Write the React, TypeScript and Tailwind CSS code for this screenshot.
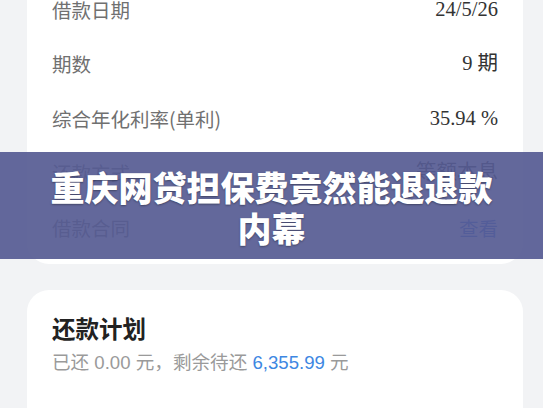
const rows: { label: string; value: string; blue?: boolean }[] = [
  { label: "借款日期", value: "24/5/26" },
  { label: "期数", value: "9 期" },
  { label: "综合年化利率(单利)", value: "35.94 %" },
  { label: "还款方式", value: "等额本息" },
  { label: "借款合同", value: "查看", blue: true },
];

const sans = "font-['Noto_Sans_CJK_SC','Noto_Sans',sans-serif]";

export default function App() {
  return (
    <div className={`relative w-[543px] h-[408px] overflow-hidden bg-[#f2f3f5] pl-[27px] pr-[20px] ${sans}`}>
      <div className="-mt-[18px] bg-white rounded-b-[22px] pb-[9px]">
        {rows.map((r) => (
          <div key={r.label} className="flex h-[54.5px] items-center justify-between px-[25px]">
            <span className="text-[19.5px] text-[#707070]">{r.label}</span>
            <span
              className={
                r.blue
                  ? "text-[19.5px] text-[#3b6fe0]"
                  : "font-['Liberation_Serif','Noto_Sans_CJK_SC',serif] text-[20.5px] text-[#333]"
              }
            >
              {r.value}
            </span>
          </div>
        ))}
      </div>

      <div className="mt-[26px] bg-white rounded-t-[22px] px-[25px] pt-[22px] h-[200px]">
        <div className="text-[23.5px] leading-[32px] font-bold text-[#222]">还款计划</div>
        <div className="mt-[7px] font-['Liberation_Sans','Noto_Sans_CJK_SC',sans-serif] text-[18.6px] leading-[24px] text-[#9a9a9a]">
          已还 0.00 元，剩余待还 <span className="text-[#3d87e2]">6,355.99</span> 元
        </div>
      </div>

      <div className="absolute left-0 right-0 top-[152px] h-[107px] bg-[rgba(86,91,146,0.92)] pt-[14px] text-center">
        <div className="text-[34px] leading-[41px] font-black text-white [text-shadow:0_1px_2px_rgba(0,0,0,0.35)]">
          重庆网贷担保费竟然能退退款
          <br />
          内幕
        </div>
      </div>
    </div>
  );
}
